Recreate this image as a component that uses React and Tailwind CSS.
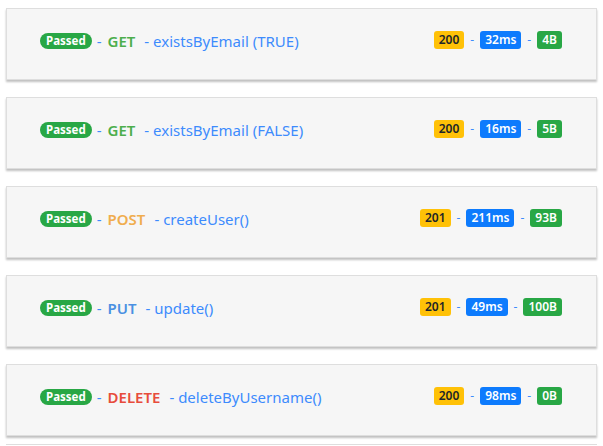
const rows = [
  { method: "GET", mcls: "text-[#4cae4c]", name: "existsByEmail (TRUE)", code: "200", time: "32ms", size: "4B" },
  { method: "GET", mcls: "text-[#4cae4c]", name: "existsByEmail (FALSE)", code: "200", time: "16ms", size: "5B" },
  { method: "POST", mcls: "text-[#f0ad4e]", name: "createUser()", code: "201", time: "211ms", size: "93B" },
  { method: "PUT", mcls: "text-[#4a90e2]", name: "update()", code: "201", time: "49ms", size: "100B" },
  { method: "DELETE", mcls: "text-[#e74c3c]", name: "deleteByUsername()", code: "200", time: "98ms", size: "0B" },
];

function Row({ r }) {
  return (
    <div className="h-[72px] shrink-0 mx-[6px] bg-[#f6f6f6] border border-[#dedede] shadow-[0_2px_2px_rgba(0,0,0,0.25)] flex items-start justify-between pl-[33px] pr-[34px] pt-[22px]">
      <div className="flex items-center text-[15px] leading-[20px]">
        <span className="bg-[#28a745] text-white font-bold text-[11.5px] leading-[16px] h-[16px] px-[6px] rounded-full">Passed</span>
        <span className="text-[#3d8bfd] ml-[5px]">-</span>
        <span className={"ml-[6px] font-semibold " + r.mcls}>{r.method}</span>
        <span className="text-[#3d8bfd] ml-[9px]">- {r.name}</span>
      </div>
      <div className="flex items-center text-[12px] leading-[18px]">
        <span className="font-semibold px-[5px] rounded-[3px] h-[18px] bg-[#ffc107] text-[#212529]">{r.code}</span>
        <span className="text-[#3d8bfd] mx-[6px]">-</span>
        <span className="font-semibold px-[5px] rounded-[3px] h-[18px] bg-[#0d7bfd] text-white">{r.time}</span>
        <span className="text-[#3d8bfd] mx-[6px]">-</span>
        <span className="font-semibold px-[5px] rounded-[3px] h-[18px] bg-[#28a745] text-white">{r.size}</span>
      </div>
    </div>
  );
}

export default function App() {
  return (
    <div className="w-[603px] h-[446px] bg-white overflow-hidden pt-[8px] flex flex-col gap-[17px]" style={{ fontFamily: '"Noto Sans", "Open Sans", sans-serif' }}>
      {rows.map((r, i) => (
        <Row key={i} r={r} />
      ))}
      <div className="mx-[6px] -mt-[9px] border-t border-[#dedede]" />
    </div>
  );
}
